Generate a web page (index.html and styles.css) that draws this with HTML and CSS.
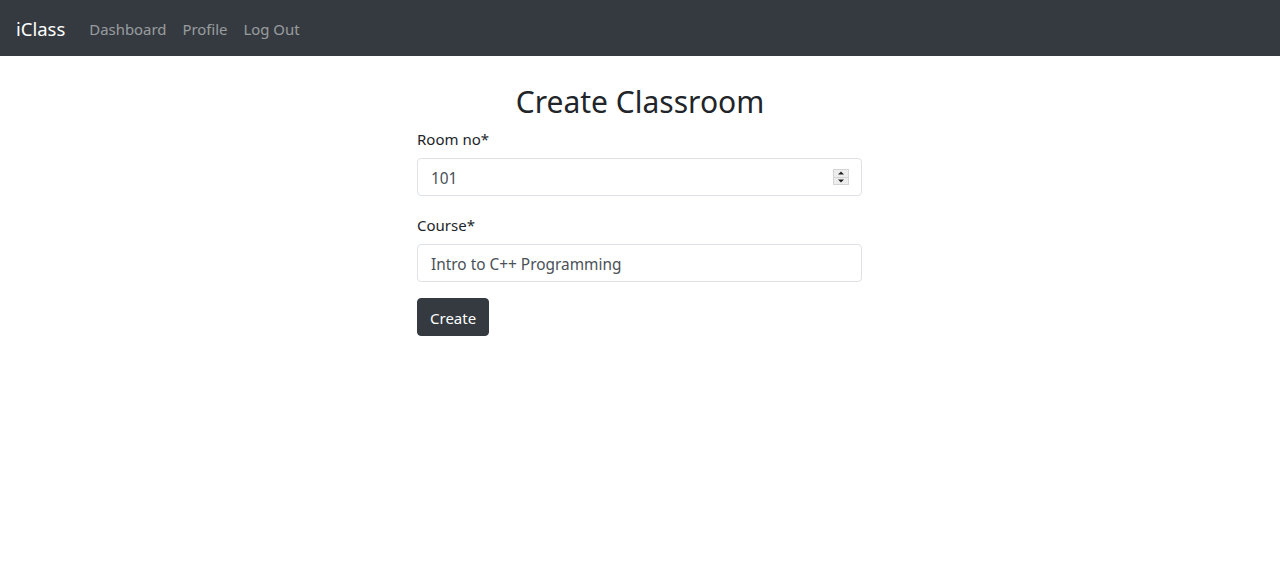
FILE: index.html
```html
<!DOCTYPE html>
<html lang="en">
<head>
<meta charset="utf-8">
<title>iClass - Create Classroom</title>
<link rel="stylesheet" href="styles.css">
</head>
<body>
<nav class="navbar">
  <a class="brand" href="#">iClass</a>
  <ul class="nav">
    <li><a href="#">Dashboard</a></li>
    <li><a href="#">Profile</a></li>
    <li><a href="#">Log Out</a></li>
  </ul>
</nav>
<main class="container">
  <h2 class="title">Create Classroom</h2>
  <form class="form">
    <div class="group">
      <label for="room">Room no*</label>
      <div class="number-wrap">
        <input id="room" class="control" type="number" value="101">
        <span class="spinner" aria-hidden="true">
          <span class="spin up"></span>
          <span class="spin down"></span>
        </span>
      </div>
    </div>
    <div class="group">
      <label for="course">Course*</label>
      <input id="course" class="control" type="text" value="Intro to C++ Programming">
    </div>
    <button type="submit" class="btn">Create</button>
  </form>
</main>
</body>
</html>
```
FILE: styles.css
```css
* { box-sizing: border-box; }
html, body { margin: 0; }
body {
  font-family: "Noto Sans", "Open Sans", sans-serif;
  font-size: 15px;
  line-height: 24px;
  color: #212529;
  background: #fff;
}
.navbar {
  height: 56px;
  background: #343a40;
  display: flex;
  align-items: center;
  padding: 2px 16px 0;
}
.brand {
  color: #fff;
  font-size: 18.5px;
  text-decoration: none;
  margin-right: 16px;
}
.nav {
  list-style: none;
  margin: 0;
  padding: 0;
  display: flex;
}
.nav a {
  display: block;
  padding: 8px;
  font-size: 14.9px;
  color: rgba(255,255,255,.5);
  text-decoration: none;
}
.container {
  width: 446px;
  margin: 0 auto;
}
.title {
  margin: 24px 0 5px;
  padding-top: 3px;
  font-size: 30px;
  font-weight: 400;
  line-height: 38px;
  text-align: center;
}
.group { margin-bottom: 16px; }
label {
  display: block;
  margin-bottom: 8px;
  padding-top: 1px;
  height: 24px;
}
.number-wrap { position: relative; }
.control {
  display: block;
  width: 445px;
  height: 38px;
  padding: 7px 13px 5px;
  font: inherit;
  font-size: 15.4px;
  color: #495057;
  border: 1px solid #dee2e6;
  border-radius: 4px;
  background: #fff;
}
.control[type=number] { -moz-appearance: textfield; appearance: textfield; }
.control::-webkit-inner-spin-button,
.control::-webkit-outer-spin-button { -webkit-appearance: none; margin: 0; }
.spinner {
  position: absolute;
  left: 416px;
  top: 11px;
  width: 16px;
  height: 16px;
  display: flex;
  flex-direction: column;
  border: 1px solid #d4d4d4;
  background: #ededed;
}
.spin {
  flex: 1;
  position: relative;
}
.spin.up { border-bottom: 1px solid #d4d4d4; }
.spin::after {
  content: "";
  position: absolute;
  left: 50%;
  top: 50%;
  transform: translate(-50%, -50%);
  border-left: 3px solid transparent;
  border-right: 3px solid transparent;
}
.spin.up::after { border-bottom: 3px solid #222; }
.spin.down::after { border-top: 3px solid #222; }
.btn {
  font: inherit;
  color: #fff;
  background: #343a40;
  border: 1px solid #343a40;
  border-radius: 4px;
  padding: 7px 12px 5px;
  width: 72px;
  height: 38px;
  line-height: 24px;
}
```
